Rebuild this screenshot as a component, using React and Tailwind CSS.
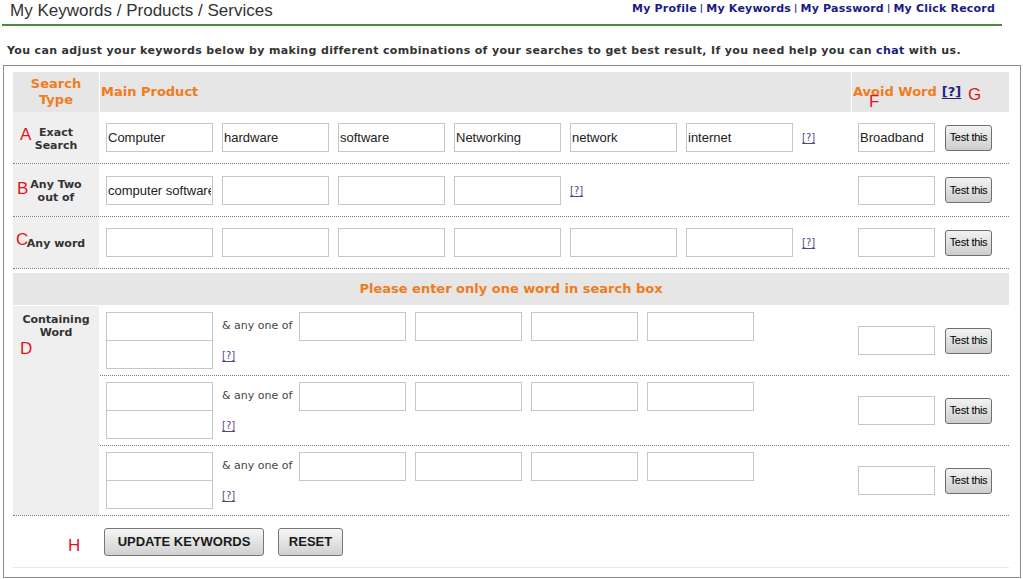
import React from 'react';

const verdana = "font-['DejaVu_Sans',Verdana,sans-serif]";

function Field({ value = '', w = 'w-[107px]', extra = '' }) {
  return (
    <input
      readOnly
      value={value}
      className={`${w} ${extra} h-[29px] shrink-0 border border-[#c6c6c6] bg-white px-[1px] text-[13px] text-[#222] outline-none font-['Liberation_Sans',Arial,sans-serif]`}
    />
  );
}

function Help() {
  return (
    <a className={`${verdana} text-[10px] text-[#56478a] underline underline-offset-2`}>[?]</a>
  );
}

function TestBtn() {
  return (
    <button className="ml-[10px] h-[26px] w-[47px] rounded-[3px] border border-[#6f6f6f] bg-linear-to-b from-[#f3f3f3] to-[#cdcdcd] text-[11px] tracking-[-0.3px] text-black font-['Liberation_Sans',Arial,sans-serif]">
      Test this
    </button>
  );
}

function Avoid({ value = '' }) {
  return (
    <div className="flex w-[157px] items-center pl-[6px]">
      <Field value={value} w="w-[77px]" />
      <TestBtn />
    </div>
  );
}

function Row({ label, h, children, avoid }) {
  return (
    <div className={`flex ${h} border-b border-dotted border-[#7d7d7d]`}>
      <div className="flex w-[86px] items-center justify-center bg-[#efefef] pt-[2px] text-center text-[11px] font-bold leading-[13px] text-[#333]">
        {label}
      </div>
      <div className="w-px" />
      <div className="flex w-[751px] items-center gap-[9px] pl-[6px]">{children}</div>
      <div className="w-px" />
      <Avoid value={avoid} />
    </div>
  );
}

function Mark({ children, className }) {
  return (
    <span className={`absolute text-[17px] leading-none text-[#e3141c] font-['Liberation_Sans',Arial,sans-serif] ${className}`}>
      {children}
    </span>
  );
}

export default function App() {
  const exact = ['Computer', 'hardware', 'software', 'Networking', 'network', 'internet'];

  return (
    <div className={`relative h-[579px] w-[1023px] overflow-hidden bg-white ${verdana}`}>
      {/* top bar */}
      <div className="ml-[2px] flex h-[26px] w-[1000px] items-start justify-between border-b-2 border-[#4a8a3c]">
        <h1 className="pl-[8px] pt-[1px] text-[17px] leading-[20px] text-[#333] font-['Liberation_Sans',Arial,sans-serif]">
          My Keywords / Products / Services
        </h1>
        <div className="flex pr-[7px] pt-[2px] text-[11px] font-bold leading-[13px] tracking-[0.2px] text-[#1b1b84]">
          <a>My Profile</a>
          <span className="px-[3px] text-[9px]">|</span>
          <a>My Keywords</a>
          <span className="px-[3px] text-[9px]">|</span>
          <a>My Password</a>
          <span className="px-[3px] text-[9px]">|</span>
          <a>My Click Record</a>
        </div>
      </div>

      <p className="mt-[18px] pl-[7px] text-[11px] font-bold leading-[14px] tracking-[0.35px] text-[#333]">
        You can adjust your keywords below by making different combinations of your searches to get best result, If you
        need help you can <a className="text-[#1b1b84]">chat</a> with us.
      </p>

      {/* main box */}
      <div className="ml-[3px] mt-[7px] w-[1018px] border border-[#8c8c8c] pb-[9px] pl-[9px] pr-[11px] pt-[6px]">
        {/* header */}
        <div className="flex h-[40px] bg-[#e6e6e6] text-[13px] font-bold text-[#f07c1c]">
          <div className="flex w-[86px] items-center justify-center text-center leading-[16px]">
            Search
            <br />
            Type
          </div>
          <div className="w-px bg-white" />
          <div className="flex w-[751px] items-center pl-[1px]">Main Product</div>
          <div className="w-px bg-white" />
          <div className="flex w-[157px] items-center pl-[1px]">
            Avoid Word
            <a className="ml-[5px] text-[#24247a] underline underline-offset-2">[?]</a>
          </div>
        </div>

        <Row
          h="h-[52px]"
          avoid="Broadband"
          label={
            <>
              Exact
              <br />
              Search
            </>
          }
        >
          {exact.map((v) => (
            <Field key={v} value={v} />
          ))}
          <Help />
        </Row>

        <Row
          h="h-[53px]"
          label={
            <>
              Any Two
              <br />
              out of
            </>
          }
        >
          <Field value="computer software" />
          <Field />
          <Field />
          <Field />
          <Help />
        </Row>

        <Row h="h-[52px]" label="Any word">
          {[0, 1, 2, 3, 4, 5].map((i) => (
            <Field key={i} />
          ))}
          <Help />
        </Row>

        {/* notice */}
        <div className="mt-[4px] flex h-[32px] items-center justify-center bg-[#e6e6e6] text-[13px] font-bold text-[#f07c1c]">
          Please enter only one word in search box
        </div>

        {/* containing word */}
        <div className="mt-px flex border-b border-dotted border-[#7d7d7d]">
          <div className="w-[86px] bg-[#efefef] pt-[7px] text-center text-[11px] font-bold leading-[13px] text-[#333]">
            Containing
            <br />
            Word
          </div>
          <div className="w-px" />
          <div className="flex flex-1 flex-col">
            {[0, 1, 2].map((i) => (
              <div
                key={i}
                className={`flex ${i < 2 ? 'h-[70px] border-b border-dotted border-[#7d7d7d]' : 'h-[69px]'}`}
              >
                <div className="flex w-[751px] pl-[6px] pt-[6px]">
                  <div className="flex flex-col">
                    <Field />
                    <Field extra="-mt-px" />
                  </div>
                  <div className="ml-[9px] flex flex-col">
                    <div className="flex h-[29px] items-center">
                      <span className="w-[77px] shrink-0 whitespace-nowrap text-[11px] text-[#444]">&amp; any one of</span>
                      <div className="flex gap-[9px]">
                        <Field />
                        <Field />
                        <Field />
                        <Field />
                      </div>
                    </div>
                    <div className="flex h-[29px] items-center">
                      <Help />
                    </div>
                  </div>
                </div>
                <div className="w-px" />
                <Avoid />
              </div>
            ))}
          </div>
        </div>

        {/* actions */}
        <div className="flex h-[52px] items-center border-b border-[#e8e8e8] pl-[91px]">
          <button className="h-[28px] w-[160px] rounded-[3px] border border-[#777] bg-linear-to-b from-[#f6f6f6] to-[#d0d0d0] text-[13px] font-bold text-[#1a1a1a] font-['Liberation_Sans',Arial,sans-serif]">
            UPDATE KEYWORDS
          </button>
          <button className="ml-[14px] h-[28px] w-[65px] rounded-[3px] border border-[#777] bg-linear-to-b from-[#f6f6f6] to-[#d0d0d0] text-[13px] font-bold text-[#1a1a1a] font-['Liberation_Sans',Arial,sans-serif]">
            RESET
          </button>
        </div>
      </div>

      {/* red annotation letters */}
      <Mark className="left-[20px] top-[126px]">A</Mark>
      <Mark className="left-[17px] top-[180px]">B</Mark>
      <Mark className="left-[16px] top-[231px]">C</Mark>
      <Mark className="left-[20px] top-[340px]">D</Mark>
      <Mark className="left-[869px] top-[93px]">F</Mark>
      <Mark className="left-[968px] top-[86px]">G</Mark>
      <Mark className="left-[68px] top-[537px]">H</Mark>
    </div>
  );
}
